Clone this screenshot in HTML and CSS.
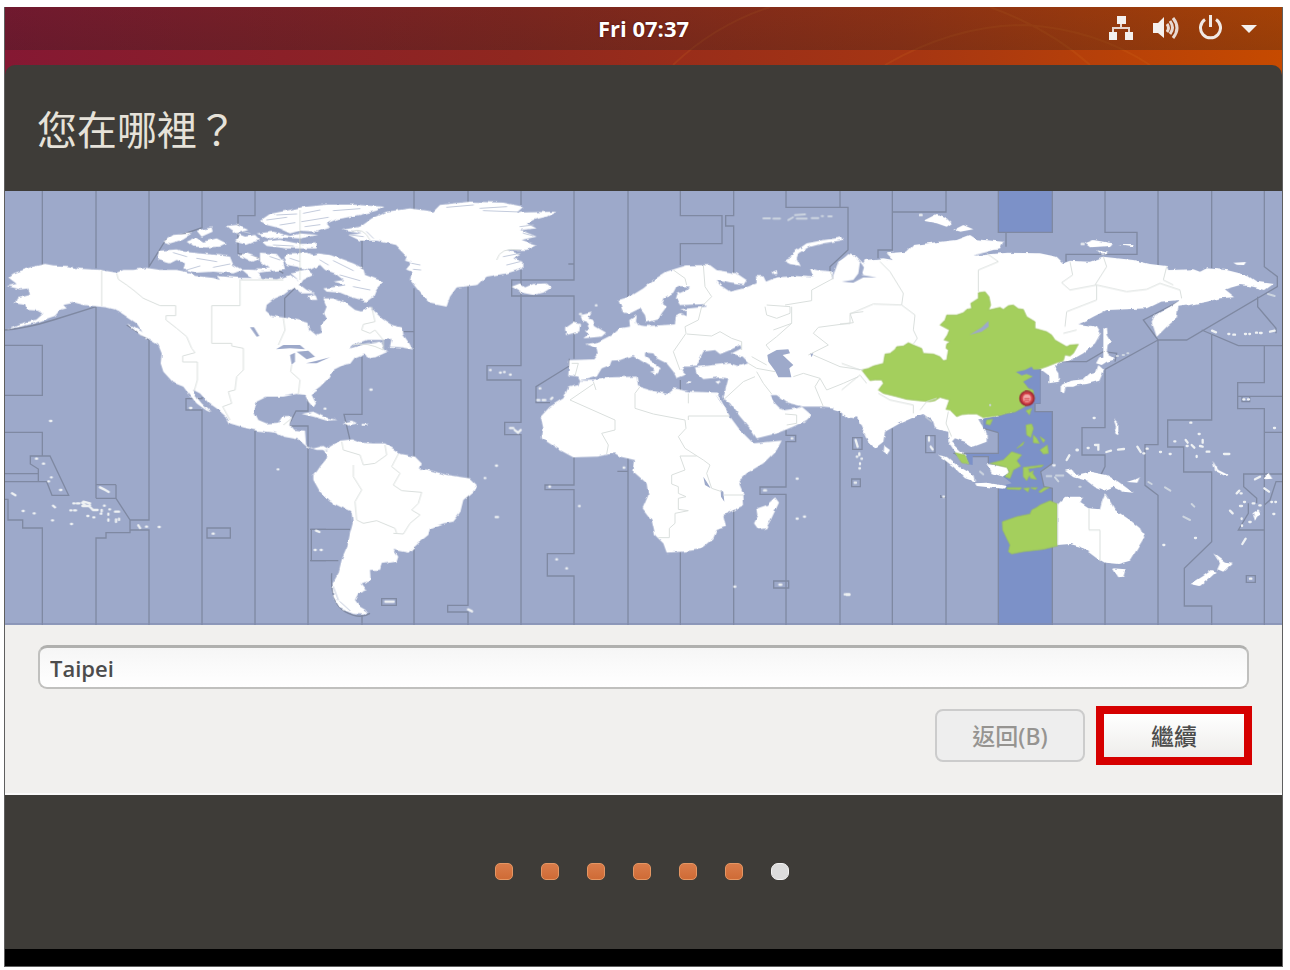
FILE: index.html
```html
<!DOCTYPE html>
<html lang="zh-Hant">
<head>
<meta charset="utf-8">
<title>您在哪裡？</title>
<link rel="stylesheet" href="styles.css">
</head>
<body>
<div class="screen">
  <header class="topbar">
    <svg class="topbar-arcs" viewBox="0 0 1277 58" preserveAspectRatio="none" aria-hidden="true">
      <path d="M668 58Q710 18 765 0M880 58Q950 18 1020 18Q1090 22 1145 58M985 0Q1045 22 1085 58"/>
    </svg>
    <div class="topbar-panel">
      <time class="clock">Fri 07:37</time>
      <div class="tray">
        <svg width="26" height="26" viewBox="0 0 26 26" role="img" aria-label="Network"><path fill="#f4f0ee" d="M9 1h9v8H9zM1 17h8v8H1zM17 17h8v8h-8z"/><path fill="none" stroke="#e6d5ce" stroke-width="2" d="M13 9v4M5 17v-4h16v4"/></svg>
        <svg width="26" height="26" viewBox="0 0 26 26" role="img" aria-label="Volume"><path fill="#f4f0ee" d="M0 8h5l6-6v21l-6-5H0z"/><path fill="none" stroke="#e9dad3" stroke-width="3" d="M14 9q3 4 0 8M17 6q5 7 0 13M20 3q8 10 0 20"/></svg>
        <svg width="24" height="26" viewBox="0 0 24 26" role="img" aria-label="Power"><path fill="none" stroke="#f1e9e5" stroke-width="3" d="M7 4.500A10 10 0 1 0 18 4.500M12.500 0v12"/></svg>
        <svg width="16" height="26" viewBox="0 0 16 26" role="img" aria-label="Menu"><path fill="#f4f0ee" d="M0 10h16l-8 8z"/></svg>
      </div>
    </div>
  </header>

  <main class="installer">
    <h1 class="title">您在哪裡？</h1>

    <svg class="map" viewBox="15 3 3831 1302" role="img" aria-label="Time zone map">
      <defs>
        <!-- roughens the coastlines -->
        <filter id="coast" filterUnits="userSpaceOnUse" x="15" y="3" width="3831" height="1302" color-interpolation-filters="sRGB">
          <feTurbulence type="fractalNoise" baseFrequency="0.045" numOctaves="2" seed="4"/>
          <feDisplacementMap in="SourceGraphic" scale="10" xChannelSelector="R" yChannelSelector="G"/>
        </filter>
      </defs>
      <rect class="sea" x="15" y="3" width="3831" height="1302"/>
      <!-- selected zone -->
      <g transform="translate(2520 0)" class="zone">
        <path d="M475 3H637V127H475Z"/>
        <path d="M545 535H600V640H585V665H637V820L602 845 612 890 637 895V1305H475V890L515 880 490 860 475 820H445V800H398V825L380 822 340 790H475V728L430 715V670Z"/>
      </g>

      <!-- zone borders -->
      <g class="lines">
        <path d="M127 3V225M15 466H127V616H15M15 727H127V798M15 851H115M15 875H140L156 916H206L150 798H91V822L115 837V875M15 928H24V990H68V1014H127V1305M15 420Q80 415 160 390T288 350M288 3V235M288 350V925M348 884H288M348 884V925H288M348 925L390 990V1028H318V1044H288V1305M447 3V230L497 150 606 113V3M380 405L447 450V990H390M390 1020H447V1305M606 620V626H558V660H606V1305M765 3V77H714V190L780 205 850 250M765 720V1305M621 1014H691V1044H621ZM924 610V663H888L865 708H924V1305M900 50V280L854 325V390M978 1018H934V1112H978M1086 1275V1305"/>
        <g transform="translate(960 0)">
          <path d="M126 150V250M126 500V673H72L90 750M282 3V60M282 295V800M282 1070V1305M250 425H282M444 3V40M444 285V1246H383V1266H444V1305M603 3V45M603 240V527H501V570H603V697H554V734H603V1305M762 3V270H575V318H762V506M748 506V528L648 590V638H690M762 800V885H675V899H762V1091H682V1158H762V1305M924 3V330M924 800V844H892M924 844V1305M-30 1018H90M-30 1112H55M185 1226H229V1246H185ZM35 1150Q30 1240 75 1265T150 1270M762 222H745"/>
        </g>
        <g transform="translate(1590 0)">
          <path d="M451 3V77H576V161H451V225M451 570V600M451 1085V1305M611 3V77H587V108H611V250M611 960V1305M768 3V52H954V180L900 230V245M930 3V52M768 720V736H797V755H768V891H690V913H768V1305M731 1173H776V1194H731ZM930 660V1305"/>
        </g>
        <g transform="translate(2520 0)">
          <path d="M157 3V180H114V205M318 3V66H157M157 715V1305M318 800V1305M475 3V127H498V170M475 127H637V3M475 728V790H340M475 728L430 715M398 800H445V820M475 885V1305M600 535V640H585V665H637V820L602 845 612 890 637 895V1305M38 743H66V778H38ZM35 867H61V890H35ZM257 737H285V788H257ZM302 915V922H317"/>
        </g>
        <g transform="translate(3120 0)">
          <path d="M195 3V127H291V193H78V215M354 3V225M515 3V235M673 3V230L712 260V290L440 450H354L310 390 425 330M354 450L195 538V713H126V795H195V830L180 860M60 515H140L190 485 230 490 225 515M354 450V764H315V886L354 916V1305M485 420L595 467H726M515 435V690H383V771H431V846H515V1055L433 1135V1248H515V1305M653 320V350L708 415V430M673 467V578H593V656H673V1305M593 619H726M673 727H726M726 852H611V890L650 925V940M625 940V970L595 1020H673M673 945L690 930 708 875H726M195 1120V1305M619 1157H646V1177H619ZM606 619H629V635H606Z"/>
        </g>
      </g>

      <g filter="url(#coast)">
      <!-- the Americas -->
      <g class="land">
        <path d="M20 288L50 282 25 262 40 250 70 240 90 232 135 222 160 226 200 228 235 236 300 240 350 248 370 240 400 240 440 234 480 240 530 240 570 248 585 258 640 264 660 270 650 258 720 264 780 264 830 268 870 255 895 270 895 285 870 300 850 315 825 325 800 345 797 362 815 378 850 382 885 388 925 398 930 420 950 436 965 430 962 405 980 385 972 370 980 350 970 325 1000 325 1040 340 1065 360 1085 365 1110 350 1125 365 1145 385 1175 405 1205 412 1200 435 1190 445 1150 450 1100 450 1060 465 1050 475 1100 460 1140 455 1150 475 1165 482 1110 505 1095 490 1065 502 1050 522 1030 525 1000 540 985 565 960 590 940 605 935 615 948 640 940 652 925 635 915 615 890 612 850 620 800 620 770 635 763 665 775 690 800 700 835 698 845 682 875 680 868 705 880 720 915 722 918 765 940 775 970 768 990 780 950 780 920 770 895 748 850 740 825 728 770 722 730 712 690 700 680 682 650 655 625 638 600 610 580 600 582 612 605 640 635 668 620 662 590 640 565 610 550 590 520 578 490 545 482 520 485 490 475 465 450 450 430 430 410 400 380 380 350 360 320 352 250 345 225 338 190 345 200 355 180 360 165 378 130 390 100 400 60 410 20 418 60 402 110 388 130 370 115 362 80 360 75 345 45 340 50 325 90 315 85 295 60 298Z"/>
        <path d="M475 210L480 182 530 178 550 185 600 190 650 195 690 200 700 225 728 240 700 250 640 245 590 248 550 238 555 220 530 210 510 220ZM490 155L520 135 575 130 545 150 510 160ZM560 155L590 142 610 155 650 145 680 160 660 170 620 172 580 170ZM590 122L635 112 638 125 605 140ZM680 108L710 105 745 120 710 130 735 140 765 135 780 150 740 165 705 155 720 138ZM715 195L740 190 780 205 755 215ZM780 188L830 192 850 215 855 240 800 245 760 250 770 235 810 235 780 215ZM725 238L765 240 785 262 760 268ZM780 92L810 72 870 60 900 52 980 44 1060 44 1150 50 1130 62 1080 75 1010 88 980 100 990 112 950 125 900 122 870 130 830 112 800 105ZM770 130L820 125 870 138 900 130 955 135 900 145 840 142 810 148ZM785 155L840 150 900 162 950 160 950 175 860 175 800 168ZM850 205L865 190 920 188 940 195 955 190 990 195 1060 220 1090 235 1095 255 1150 275 1130 295 1120 320 1100 335 1050 320 1020 308 980 305 970 295 1010 290 1040 285 1000 275 1030 270 1005 250 975 240 960 225 930 240 890 230 860 225ZM870 248L920 238 940 255 910 270 900 285 920 300 945 310 900 310 880 290 895 270ZM925 318L945 312 952 330 935 330ZM380 400L410 415 450 440 495 460 500 472 465 455 420 435Z"/>
        <g transform="translate(960 0)">
          <path d="M65 120L120 110 155 85 200 65 270 55 340 65 360 45 450 35 550 38 610 50 590 68 710 65 680 80 640 90 620 100 650 115 600 120 650 140 605 150 650 165 620 180 560 180 600 195 580 205 610 215 610 235 560 250 500 260 475 285 410 292 390 320 380 350 330 340 310 320 290 295 270 270 275 245 258 238 275 218 255 212 260 200 225 165 170 152 120 152 85 135 125 130 90 125Z"/>
          <path d="M215 445L235 415 248 412 250 435 268 460 278 478 245 472 210 470ZM138 500L180 488 210 482 165 502ZM575 290L600 280 615 292 640 282 680 280 695 292 670 308 640 315 605 308ZM-55 672L-20 665 10 680 50 690 20 692 -20 680ZM68 698L95 692 112 700 85 706ZM125 702H142V707H125Z"/>
          <path d="M0 768L20 782 30 770 60 752 95 748 120 758 160 760 195 760 225 780 240 792 285 800 305 820 300 840 320 838 380 855 450 865 470 885 460 905 430 930 420 970 400 995 370 1000 330 1015 325 1035 300 1055 265 1088 220 1080 235 1100 230 1115 185 1122 180 1140 150 1140 152 1170 125 1180 140 1200 115 1210 105 1230 120 1250 145 1265 130 1274 100 1272 60 1255 40 1220 38 1180 55 1150 65 1110 82 1070 90 1030 98 1000 95 965 60 950 30 935 0 905 -20 870 -20 855 -10 845 0 830 20 805 22 795 10 780Z"/>
        </g>
      </g>

      <!-- Europe and Africa -->
      <g class="land" transform="translate(1590 0)">
        <path d="M118 510L190 508 203 490 200 475 165 462 200 458 225 445 250 432 270 415 300 410 298 390 320 375 318 395 325 405 345 408 400 405 435 403 437 380 450 372 470 378 470 365 450 358 530 350 525 342 450 345 438 325 442 312 470 300 480 290 440 288 430 308 400 325 395 340 410 350 395 370 385 388 350 398 345 375 330 355 300 370 280 368 265 330 300 320 340 295 370 270 410 245 440 235 470 226 540 225 560 240 620 250 650 270 640 285 600 280 560 270 570 285 600 305 640 295 680 280 678 258 700 258 708 275 740 262 800 258 850 262 840 235 860 240 910 245 905 262 940 270 1010 270V680H985L970 685 950 670 930 655 880 650 820 650 770 638 740 615 722 615 735 640 750 655 765 660 800 655 815 650 845 675 830 690 790 710 740 730 680 745 660 715 630 680 600 640 580 625 585 605 595 565 570 562 520 567 500 550 495 532 540 526 600 520 625 528 655 520 635 500 605 490 635 475 630 465 600 480 570 492 555 480 520 485 510 505 503 525 480 530 460 530 455 545 465 555 440 565 430 545 410 520 380 505 370 490 345 488 345 498 370 518 392 535 382 552 372 535 330 510 310 495 270 510 245 512 240 525 215 535 200 560 170 568 150 570 145 560 115 556Z"/>
        <path d="M150 572L190 572 240 562 320 560 325 590 360 600 410 612 430 595 480 605 560 608 575 635 600 680 630 720 670 760 755 752 740 780 700 820 650 850 625 875 640 910 642 945 580 975 588 1010 560 1020 550 1045 510 1078 460 1085 410 1088 400 1060 375 1035 365 990 338 955 355 915 350 880 310 845 315 810 270 800 255 790 200 800 130 802 90 780 35 745 40 715 32 680 60 650 100 625 115 592 145 585ZM735 922L747 938 722 990 708 1015 685 1018 672 1000 685 975 682 955 710 945ZM152 375L185 368 175 385 190 392 195 408 228 428 215 440 160 445 175 432 165 422 180 415 170 395 158 392ZM105 415L130 398 150 402 148 425 108 435ZM760 212L780 205 790 188 830 160 880 150 938 142 940 150 880 160 835 172 805 190 800 205 812 228 780 222ZM922 235L930 215 955 192 980 200 1000 220 980 270 950 275 945 255ZM725 245L740 240 742 252 728 252ZM360 545L384 542 378 552ZM470 574H486V579H470ZM556 575L572 572 565 582Z"/>
      </g>

      <!-- Asia and Oceania -->
      <g class="land" transform="translate(2520 0)">
        <path d="M-20 255L-5 215 20 200 45 195 55 215 50 250 70 255 60 235 75 210 130 205 160 210 140 190 200 185 220 165 300 155 350 150 390 135 410 148 490 155 480 175 405 196 500 188 600 190 650 200 670 220 690 212 750 215 790 200 880 210 930 222 980 228 985 240 1060 238 1080 245 1100 235 1160 240 1220 255 1250 275 1300 282 1275 300 1240 290 1200 285 1155 298 1185 322 1140 325 1100 335 1050 345 1015 350 1010 385 980 410 950 440 935 395 945 375 990 350 1020 330 960 335 920 355 860 358 800 360 760 380 720 402 770 410 782 430 765 460 730 490 690 512 660 515 642 530 655 550 657 575 625 580 625 555 605 540 575 530 530 545 545 575 565 600 560 640 530 660 460 680 415 688 440 730 440 755 400 770 375 755 345 745 335 755 375 795 385 822 365 815 345 785 325 755 325 725 300 720 285 715 280 695 250 672 230 678 180 700 135 725 130 755 105 775 85 755 55 690 50 680 25 685 0 665-20 660Z"/>
        <path d="M130 765L150 780 140 795 128 785ZM295 795L320 800 350 825 400 855 405 875 375 865 340 830ZM405 880L440 878 500 888 490 896 410 888ZM440 822L500 830 508 850 490 860 455 850ZM250 92L290 72 315 80 335 100 320 110 290 100ZM340 120L370 105 400 118 360 125Z"/>
        <g transform="translate(600 0)">
          <path d="M135 160L160 150 218 160 210 168 150 172ZM235 165L280 165 280 172ZM168 180L205 188 190 194ZM580 218L618 216 612 225 590 224ZM190 412L198 410 200 435 212 455 203 465 200 490 205 495 228 508 200 515 185 525 168 520 178 502 190 500ZM175 525L192 540 178 572 140 582 110 586 100 590 78 590 72 610 62 605 62 588 90 572 130 568 150 550 168 545ZM75 842L95 838 108 855 150 845 200 855 235 875 280 908 250 905 220 890 190 902 165 892 140 872 100 862ZM260 876L295 865 300 860 292 878ZM52 945L75 920 130 920 120 938 145 955 180 958 187 930 195 910 208 930 225 960 270 990 300 1015 313 1042 290 1080 270 1112 235 1122 195 1118 170 1105 150 1090 120 1070 90 1062 52 1065ZM218 1135L257 1138 250 1160 235 1162ZM520 1090L540 1105 555 1115 578 1118 550 1145 532 1138 540 1120ZM452 1182L490 1158 515 1140 530 1145 505 1168 480 1188ZM220 685L235 700 235 735 222 730 228 710ZM518 812L535 840 565 855 555 858 525 842ZM670 860L685 848 697 866 675 868ZM638 970L655 958 662 970 645 992Z"/>
        </g>
      </g>
      </g>

      <!-- highlighted territory -->
      <g class="chosen" transform="translate(2520 0)">
        <path d="M65 540L85 535 100 528 130 520 135 492 150 490 165 478 170 470 190 468 205 458 220 465 245 475 250 490 280 492 300 500 310 512 320 510 325 480 318 475 320 462 330 455 312 450 322 435 328 420 300 405 315 390 320 375 350 375 370 368 380 358 395 355 392 340 415 325 415 308 435 305 447 320 452 345 446 360 480 352 490 358 505 347 520 345 535 356 550 358 560 380 585 395 585 415 620 425 635 435 645 450 680 470 690 465 715 463 700 490 690 498 675 495 670 512 650 518 620 530 575 545 560 550 580 558 550 575 565 595 580 600 582 625 570 640 545 655 525 666 500 670 480 676 430 683 410 672 385 672 365 674 350 680 330 660 318 658 328 630 300 622 285 632 270 635 235 632 200 628 170 620 130 610 115 600 130 580 125 570 105 570 90 572Z"/>
        <path d="M487 995L530 980 570 972 575 960 590 952 600 945 630 932 652 942V1068L610 1078 550 1085 515 1092 505 1085 510 1065 500 1045 488 1020ZM440 690L458 688 450 705 438 702ZM558 662L575 655 568 675ZM345 788L375 795 387 822 365 818ZM450 820L490 810 515 785 545 795 530 812 542 828 520 840 510 865 495 860 508 845 500 832ZM558 705L575 702 580 715 572 742 560 735ZM550 832L610 825 605 830 565 836 568 848 580 842 578 850 590 868 572 865 568 856 560 872 550 860ZM600 780L622 765 625 790 610 792ZM580 735L590 745 598 760 580 758ZM600 740L615 750 610 758ZM530 775L552 755 548 765ZM500 893H545L540 899 502 897ZM550 895L568 893 564 906ZM572 893H592L585 899ZM596 905L612 893 628 892 602 908Z"/>
      </g>

      <!-- inland waters -->
      <g class="sea">
        <path d="M750 412L762 412 778 438 770 440ZM828 478L850 465 900 465 915 478 870 475ZM870 495L885 488 885 515 875 524ZM890 485L925 482 945 500 920 508ZM918 520L950 512 990 502 950 520Z"/>
        <path transform="translate(1590 0)" d="M712 495L740 480 775 478 780 490 758 495 790 525 778 535 784 562 745 562 735 542 715 515ZM520 860L530 875 542 895 525 885ZM572 900L580 905 583 935 573 920ZM555 612L580 650 568 630ZM840 490L850 490 845 502Z"/>
        <path transform="translate(2520 0)" d="M388 435L425 412 445 393 446 410 425 425ZM60 215L72 232 65 255 110 262 70 262 40 278 5 275 40 270 55 250ZM715 402L755 392 750 408ZM400 196L480 176 440 194Z"/>
      </g>
      <path class="zone" transform="translate(2520 0)" d="M528 546L555 540 575 530 580 538 600 538V640H585L582 602 550 575 580 560 560 552 545 556Z"/>
      <!-- channels between the arctic islands -->
      <path class="channels" d="M800 90L860 82M830 75L890 72M840 105L885 98M910 70L960 60M905 95L985 82M915 110L960 104M1000 62L1080 56M520 188L560 200M590 205L650 215M640 232L690 222M560 240L600 228M810 200L840 210M870 205L900 215M1000 212L1060 242M1020 255L1080 272M1060 290L1110 300M960 210L985 225M730 125L750 130M820 165L880 168M1050 135L1090 140M1100 125L1120 145M1235 220L1260 225M1240 238L1262 240M1340 52L1420 45M1440 55L1520 50M1450 62L1560 66M1560 110L1600 105M1570 130L1600 138M1510 200L1560 190M1520 225L1560 215M1000 1190L1015 1230M1020 1235L1050 1262M1080 465L1130 458"/>

      <!-- borders drawn over land -->
      <g class="borders">
        <path d="M305 240V348M350 250L355 268 380 285 400 300 430 325 480 347H527V377H498V390L530 415 560 440 575 475 585 488 548 498V516H592V570L582 605M720 268V347H635V460H695V468L730 475V540L710 560 705 600 685 605 695 640 668 650 690 690M722 270H850M850 385L855 420 835 465M875 525L872 545 900 570 895 612M850 705L875 685M900 60V270"/>
        <path transform="translate(960 0)" d="M155 350L165 395 130 403 125 420 150 430 165 420 190 450V478M100 465Q140 455 190 480M65 755L70 780 120 795 130 825 165 820 200 795 195 765M235 792L215 830 240 850 220 885 245 902 305 907 295 940 275 960 300 975 270 1000 250 1032 220 1030M100 825L100 860 125 900 105 935 110 990 130 1000 170 992 225 1015 230 1030M530 210Q540 170 600 180M95 125Q130 110 150 150"/>
        <path transform="translate(1590 0)" d="M125 520H145L135 558M190 575L198 600M190 582L120 630 255 690V720L215 730 235 765 230 792M330 590L315 610V655L370 672 465 690M475 690V678H600M475 610V640M465 690L468 715 445 740 465 775 520 810 540 825 530 850 545 895 575 905M500 798H450L465 840 425 855 425 882 445 890V910L468 920 445 925V958L475 962 435 970V1000L418 1015V1043H385M580 915H640M430 240L465 265 470 285M520 225L525 290 545 320 515 350 505 390 465 410 468 430 430 485 450 540M470 432L545 438 570 425 605 445 635 455V480M705 350L710 375 740 385 780 370V350L710 345M765 345L845 332V300L910 265 900 245M785 350V400L740 440 708 465 720 480M785 400L730 420M655 520L680 535 735 545M665 500L710 525M680 545L700 580 725 612M675 560L640 575 580 630M790 560L820 550 870 565 890 600 940 580 985 560M870 565L855 590 880 650M835 495L895 465 850 430 865 412 970 398 960 370 1000 365M850 495L930 530 1000 540M765 672L800 675V700L770 705"/>
        <path transform="translate(2520 0)" d="M0 402L30 400V372L100 342 185 345 190 310 150 245 120 215M185 345L225 375 220 420 232 445 220 462M440 190L475 215 415 240V305M690 215L698 255 665 278 690 300 770 285 860 305 920 298 960 280 1020 300 1025 325M770 285V330L680 365 675 410M790 200L800 230 765 285M980 230L970 270 1000 285M670 430L710 420M5 520L60 540M5 600L60 555 80 580M115 610L150 630 220 645V670M240 660L260 635 290 625M255 680L275 695M325 665L318 700 335 740M653 940V1065M747 955V1020H780V1112"/>
      </g>

      <!-- small islands -->
      <g class="dots">
        <path d="M108 806h3M129 821h3M150 693h4M145 874h2M153 862h2M180 900h4M36 910l10 6M68 963h3M101 970h3M156 991h3M159 947l6 5M213 1002h3M300 892l12 6 14 8M220 940h3M230 940h8M246 938l12 10 12-2M250 935l20 5M211 961h3M222 961h6M247 948h20l12 12h14M262 978h3M280 982h3M312 947h2M305 960v4M302 971h2M328 958h2M325 971v3M325 988v4M345 965h12M348 996v-8M357 990v-4M415 1006l5 8M438 1010h3M476 1011h3M638 1031h3M570 654h4M948 1022l10 4M944 1080h3M962 1080h3M833 838h2M974 656h2"/>
        <path transform="translate(960 0)" d="M151 599h4M510 540h2M540 548h2M552 546h2M570 554h2M659 595h2M652 630h6M668 630h8M693 627l4-4M570 714h10M584 720l10 8 8-8M528 827h3M494 864h2M527 981h7M688 890h2M777 948h2M709 1108h2M739 1135h2M911 833h2M196 1235h25M444 1258l12 6M828 346h1M780 372h3"/>
        <path transform="translate(1590 0)" d="M800 866h3M800 986h3M822 980h3M702 901h6M613 1190h3M748 1184h6M944 1213h14M785 745h2"/>
        <path transform="translate(1590 0)" class="faint" d="M700 85h20M730 86h20M775 90l14-8M795 75l30-2M800 86h30M845 84h20M875 78h4M895 79h10"/>
        <path transform="translate(2520 0)" d="M47 750l6 20M58 790v5M50 800h2M64 806h2M60 820v2M58 835h2M44 878h4M267 742v10M272 770l6 8M310 920h2M20 1214h8M240 75h5M725 162h6M710 780h3M640 826h4"/>
        <path transform="translate(2520 0)" class="faint" d="M620 858h14M648 857h22M420 845l10 8M450 645h1"/>
        <path transform="translate(3120 0)" d="M161 684h3M110 780h3M143 774h3M165 765h10v14M199 786l14-4M234 779l18-2M292 770l10 16M320 776h3M310 790h3M360 786h3M389 792h3M403 754h3M451 698h3M476 732h3M437 750l6 8M440 768h3M455 765l8 8M470 798v3M488 750v8M480 768l8 2M500 785h8M552 792h16M516 422l12 5M565 432h3M580 434h5M615 432h3M628 432h2M648 428h3M660 429h5M690 425l14-3M702 714h3M610 628h3M624 628h3M645 868l15-8M673 895l14 10M590 910l8-8M602 910h3M612 936h3M638 940h5M600 948h6M570 962l8 8M658 946h4M605 985v2M606 1006v2M628 996h4M694 936h2M706 936h2M700 972h3M607 1062l10-16M465 1044h3M370 1065h3M630 1166h4M80 810l8-14"/>
        <path transform="translate(3120 0)" class="faint" d="M430 980l20 10M455 942l8 8M375 892l16 10M325 876l10 6M684 312l20 6M230 498h4M248 495h4M262 490h3M118 890h4M45 862l10 12"/>
      </g>

      <g class="pin">
        <circle cx="3081" cy="625" r="21"/>
        <circle class="pin-core" cx="3081" cy="625" r="12"/>
        <path d="M3073 626h16M3073 632h16"/>
      </g>
      <path class="map-edge" d="M15 1302H3846"/>
    </svg>

    <form class="panel">
      <input class="city" type="text" value="Taipei" aria-label="城市">
      <div class="actions">
        <button class="btn" type="button" disabled>返回(B)</button>
        <button class="btn btn-next" type="button">繼續</button>
      </div>
    </form>

    <footer class="progress">
      <span class="step"></span><span class="step"></span><span class="step"></span><span class="step"></span><span class="step"></span><span class="step"></span><span class="step step-now"></span>
    </footer>
  </main>
  <div class="base"></div>
</div>
</body>
</html>
```

FILE: styles.css
```css
* { box-sizing: border-box; }

body {
  margin: 0;
  padding: 7px 7px 3px 4px;
  background: #fff;
  font-family: "Noto Sans", "Noto Sans CJK TC", sans-serif;
}

.screen {
  border: 1px solid #5f5f5f;
  border-top: 0;
  background: linear-gradient(90deg, #851833, #90271f 40%, #a53513 70%, #c64a00);
}

.topbar { position: relative; padding-bottom: 15px; }

.topbar-arcs {
  position: absolute;
  inset: 0;
  width: 100%;
  height: 100%;
  fill: none;
  stroke: rgba(225, 130, 40, .13);
  stroke-width: 2;
}

.topbar-panel {
  position: relative;
  display: grid;
  grid-template-columns: 1fr auto 1fr;
  align-items: center;
  height: 43px;
  padding: 0 25px 2px;
  background: linear-gradient(rgba(30, 30, 30, .2), rgba(30, 30, 30, .28));
}

.clock {
  grid-column: 2;
  color: #fff;
  font: 700 22px/40px "Open Sans", "Noto Sans", sans-serif;
  text-shadow: 0 0 2px #400;
}

.tray {
  display: flex;
  justify-content: flex-end;
  align-items: center;
  gap: 19px;
}

.installer {
  background: #3e3c38;
  border-radius: 10px 10px 0 0;
}

.title {
  margin: 0;
  padding: 33px 32px;
  color: #e6e2d9;
  font: 400 40px/60px "Noto Sans CJK TC", sans-serif;
}

.map { display: block; width: 100%; height: auto; }
.sea { fill: #9da9ca; }
.zone { fill: #7c91c8; }
.lines { fill: none; stroke: #7f89a2; stroke-width: 4; }
.land { fill: #fff; }
.channels { fill: none; stroke: #c3cbdc; stroke-width: 3; stroke-linecap: round; }
.chosen { fill: #a4cf5d; stroke: #98bd5f; stroke-width: 2; }
.borders { fill: none; stroke: #dadfdd; stroke-width: 3; }
.dots { fill: none; stroke: #eef1f3; stroke-width: 7; stroke-linecap: round; }
.faint { stroke: #cdd5e0; stroke-width: 6; }
.pin { fill: #d34248; stroke: #9c2a38; stroke-width: 5; }
.pin-core { fill: #f4a9a9; stroke: none; }
.pin path { stroke: #d34248; stroke-width: 3; }
.map-edge { stroke: #808bad; stroke-width: 4; }

.panel {
  padding: 20px 33px 31px;
  background: #f1f0ee;
  border-bottom: 2px solid #fafafa;
}

.city {
  display: block;
  width: 100%;
  height: 44px;
  padding: 0 10px;
  border: 2px solid #c0c0be;
  border-top: 3px solid #b0b0ae;
  border-radius: 9px;
  background: linear-gradient(#f6f6f6, #fff);
  color: #4c4c4c;
  font: 600 22px/30px "Open Sans", "Noto Sans", sans-serif;
}

.actions {
  display: flex;
  justify-content: flex-end;
  gap: 14px;
  padding-top: 20px;
}

.btn {
  width: 150px;
  height: 53px;
  border: 2px solid #ccc;
  border-radius: 8px;
  background: #eee;
  color: #969491;
  font: 500 23px/30px "Noto Sans", "Noto Sans CJK TC", sans-serif;
}

.btn-next {
  border: 5px solid #d60000;
  border-radius: 0;
  outline: 3px solid #d60000;
  background: linear-gradient(#fff, #eeedeb);
  color: #4c4c4c;
}

.progress {
  display: flex;
  justify-content: center;
  align-items: center;
  gap: 28px;
  height: 154px;
  padding: 0 4px 2px 0;
}

.step {
  width: 18px;
  height: 17px;
  border: 1px solid #e49663;
  border-radius: 5px;
  background: linear-gradient(#d97c4a, #cf6b36);
}

.step-now {
  border-color: #f2f2f2;
  border-radius: 7px;
  background: #dcdcdc;
}

.base { height: 17px; background: #000; }
```
